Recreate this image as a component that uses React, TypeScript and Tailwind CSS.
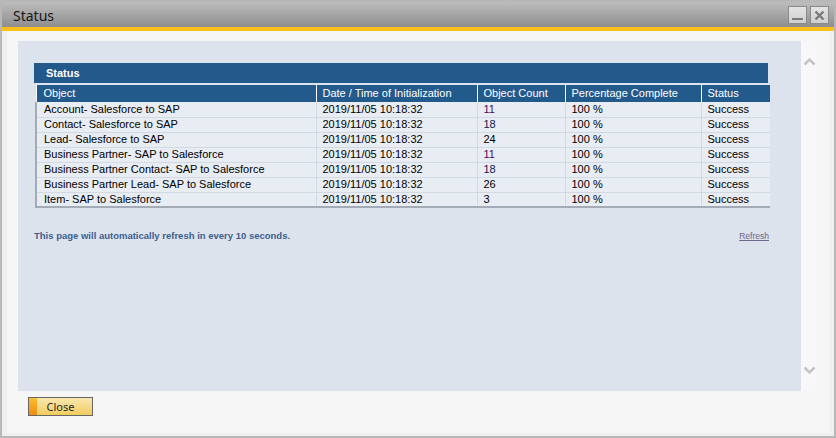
import React from "react";

const rows: { obj: string; count: string; color: string }[] = [
  { obj: "Account- Salesforce to SAP", count: "11", color: "text-[#4e0a55]" },
  { obj: "Contact- Salesforce to SAP", count: "18", color: "text-[#0c1b55]" },
  { obj: "Lead- Salesforce to SAP", count: "24", color: "text-black" },
  { obj: "Business Partner- SAP to Salesforce", count: "11", color: "text-[#4e0a55]" },
  { obj: "Business Partner Contact- SAP to Salesforce", count: "18", color: "text-[#0c1b55]" },
  { obj: "Business Partner Lead- SAP to Salesforce", count: "26", color: "text-black" },
  { obj: "Item- SAP to Salesforce", count: "3", color: "text-black" },
];

export default function App() {
  return (
    <div className="w-[836px] h-[438px] bg-white overflow-hidden">
      <div className="w-[836px] h-[438px] border-2 border-[#b8b8b8] flex flex-col bg-[#f2f2f2]">
        {/* title bar */}
        <div className="h-[25px] flex items-center justify-between bg-gradient-to-b from-[#bdbdbd] to-[#8e8e8e] pl-[11px] pr-[5px]">
          <span className="text-[14px] text-[#151515] leading-none mt-[2px]" style={{ fontFamily: '"Noto Sans", "Open Sans", sans-serif' }}>
            Status
          </span>
          <div className="flex gap-[3px] mt-[1px]">
            <div className="w-[19px] h-[18px] border border-[#8a8a8a] bg-gradient-to-b from-[#e4e4e4] to-[#cfcfcf] flex items-end justify-center pb-[3px]">
              <div className="w-[11px] h-[2px] bg-[#7a7a7a]" />
            </div>
            <div className="w-[19px] h-[18px] border border-[#8a8a8a] bg-gradient-to-b from-[#e4e4e4] to-[#cfcfcf] flex items-center justify-center">
              <svg width="11" height="11" viewBox="0 0 11 11">
                <path d="M1.5 1.5 L9.5 9.5 M9.5 1.5 L1.5 9.5" stroke="#7a7a7a" strokeWidth="2.4" />
              </svg>
            </div>
          </div>
        </div>
        <div className="h-[4px] bg-[#f9c01a]" />
        {/* body */}
        <div className="flex-1 flex flex-col pl-[11px] pt-[10px] bg-[#f6f6f6] border-l-[5px] border-r-[4px] border-b-[3px] border-[#efefef]">
          <div className="flex">
            <div className="w-[783px] h-[350px] bg-[#dce3ed] pt-[22px] pl-[16px]" style={{ fontFamily: '"Liberation Sans", Arial, sans-serif' }}>
              <div className="w-[734px] h-[20px] bg-[#22588a] text-white font-bold text-[11px] flex items-center pl-[12px] pt-[1px]">
                Status
              </div>
              <table className="table-fixed border-collapse ml-[1px] mt-[2px] w-[734px] text-[11px] leading-none">
                <colgroup>
                  <col className="w-[280px]" />
                  <col className="w-[161px]" />
                  <col className="w-[88px]" />
                  <col className="w-[136px]" />
                  <col className="w-[69px]" />
                </colgroup>
                <thead>
                  <tr className="h-[17px] bg-[#235a8c] text-white">
                    <th className="font-normal text-left pl-[7px] border-l border-white">Object</th>
                    <th className="font-normal text-left pl-[6px] border-l border-white">Date / Time of Initialization</th>
                    <th className="font-normal text-left pl-[6px] border-l border-white">Object Count</th>
                    <th className="font-normal text-left pl-[6px] border-l border-white">Percentage Complete</th>
                    <th className="font-normal text-left pl-[6px] border-l border-white">Status</th>
                  </tr>
                </thead>
                <tbody>
                  {rows.map((r, i) => (
                    <tr
                      key={i}
                      className={`h-[15px] bg-[#e8ecf3] text-black ${i === rows.length - 1 ? "border-b-2 border-[#a3abb6]" : "border-b border-[#d3d9e2]"}`}
                    >
                      <td className="pl-[7px] border-l-2 border-[#a3abb6] whitespace-nowrap">{r.obj}</td>
                      <td className="pl-[6px] border-l border-[#d3d9e2]">2019/11/05 10:18:32</td>
                      <td className={`pl-[6px] border-l border-[#d3d9e2] ${r.color}`}>{r.count}</td>
                      <td className="pl-[6px] border-l border-[#d3d9e2]">100 %</td>
                      <td className="pl-[6px] border-l border-[#d3d9e2]">Success</td>
                    </tr>
                  ))}
                </tbody>
              </table>
              <div className="w-[735px] flex justify-between items-center mt-[21px]">
                <span className="text-[9.5px] font-bold text-[#3c5f8e]">
                  This page will automatically refresh in every 10 seconds.
                </span>
                <span className="text-[8.5px] text-[#6e6490] underline">Refresh</span>
              </div>
            </div>
            <div className="w-[16px] h-[350px] bg-[#f8f8f8] flex flex-col items-center justify-between pt-[16px] pb-[16px]">
              <svg width="13" height="9" viewBox="0 0 13 9">
                <path d="M1.5 7.5 L6.5 2.5 L11.5 7.5" stroke="#c4c4c4" strokeWidth="2.5" fill="none" />
              </svg>
              <svg width="13" height="9" viewBox="0 0 13 9">
                <path d="M1.5 1.5 L6.5 6.5 L11.5 1.5" stroke="#c4c4c4" strokeWidth="2.5" fill="none" />
              </svg>
            </div>
          </div>
          <div className="pl-[10px] pt-[6px]">
            <button className="w-[65px] h-[19px] border border-[#666666] flex bg-gradient-to-b from-[#f9e7ad] to-[#f0cc5c]">
              <div className="w-[8px] h-full bg-gradient-to-b from-[#fbc02d] to-[#ee8a12]" />
              <span className="flex-1 text-[11px] text-[#1e2a2a] leading-[17px] pr-[8px]" style={{ fontFamily: '"Noto Sans", "Open Sans", sans-serif' }}>
                Close
              </span>
            </button>
          </div>
        </div>
      </div>
    </div>
  );
}
